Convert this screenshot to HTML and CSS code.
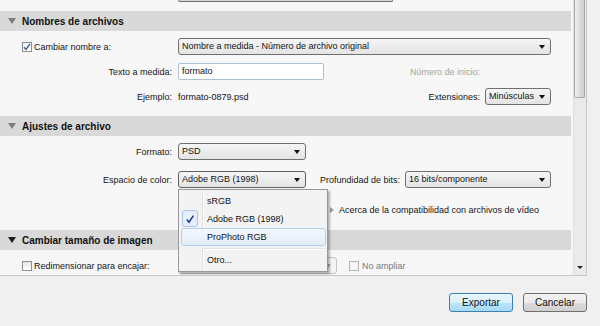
FILE: index.html
```html
<!DOCTYPE html>
<html lang="es">
<head>
  <meta charset="UTF-8" />
  <title>Exportar</title>
  <link rel="stylesheet" href="styles.css">
</head>
<body>
  <div class="dialog">
    <div class="panel">
      <div class="content">
        <div class="stub"></div>

        <div class="section-head"><span class="tri"></span>Nombres de archivos</div>
        <div class="section s-names">
          <div class="row">
            <div class="cell check-cell"><span class="chk on"><svg width="8" height="8" viewBox="0 0 8 8"><path d="M1 4.2 L3 6.4 L7 0.8" fill="none" stroke="#3f5896" stroke-width="1.4"/></svg></span>Cambiar nombre a:</div>
            <div class="select grow">Nombre a medida - Número de archivo original</div>
          </div>
          <div class="row">
            <div class="cell">Texto a medida:</div>
            <div class="input">formato</div>
            <div class="right">
              <span class="muted">Número de inicio:</span>
              <span class="slot"></span>
            </div>
          </div>
          <div class="row">
            <div class="cell">Ejemplo:</div>
            <div>formato-0879.psd</div>
            <div class="right">
              <span>Extensiones:</span>
              <div class="select slot">Minúsculas</div>
            </div>
          </div>
        </div>

        <div class="section-head"><span class="tri"></span>Ajustes de archivo</div>
        <div class="section s-file">
          <div class="row">
            <div class="cell">Formato:</div>
            <div class="select short">PSD</div>
          </div>
          <div class="row">
            <div class="cell">Espacio de color:</div>
            <div class="drop">
              <div class="select short open">Adobe RGB (1998)</div>
              <div class="menu">
                <div class="gutter-line"></div>
                <div class="item">sRGB</div>
                <div class="item checked">
                  <span class="tick"><svg width="10" height="10" viewBox="0 0 10 10"><path d="M1.8 5.6 L4 8.2 L8.4 1.6" fill="none" stroke="#17378a" stroke-width="1.5"/></svg></span>
                  Adobe RGB (1998)
                </div>
                <div class="item hover">ProPhoto RGB</div>
                <div class="sep"></div>
                <div class="item">Otro...</div>
              </div>
            </div>
            <span class="bits-label">Profundidad de bits:</span>
            <div class="select grow">16 bits/componente</div>
          </div>
          <div class="row about">
            <span class="arrow-right"></span>Acerca de la compatibilidad con archivos de vídeo
          </div>
        </div>

        <div class="section-head"><span class="tri dark"></span>Cambiar tamaño de imagen</div>
        <div class="section s-size">
          <div class="row">
            <div class="cell check-cell"><span class="chk"></span>Redimensionar para encajar:</div>
            <div class="select disabled fit"></div>
            <span class="chk off-chk"></span><span class="muted dim">No ampliar</span>
          </div>
        </div>
      </div>

      <div class="scrollbar">
        <div class="thumb"></div>
        <div class="track"></div>
        <span class="down"></span>
      </div>
    </div>

    <div class="buttons">
      <button class="btn default">Exportar</button>
      <button class="btn">Cancelar</button>
    </div>
  </div>
</body>
</html>
```

FILE: styles.css
```css
* {
  box-sizing: border-box;
}

body {
  margin: 0;
  background: #f0f0f0;
  font-family: "Liberation Sans", Arial, sans-serif;
  font-size: 9px;
  color: #141414;
}

.dialog {
  width: 600px;
  height: 326px;
  overflow: hidden;
}

.panel {
  display: flex;
  width: 587px;
  height: 276px;
  background: #f7f7f7;
  border-right: 1px solid #c9c3d3;
  border-bottom: 1px solid #c9c3d3;
  overflow: hidden;
}

.content {
  width: 571px;
  margin-right: 2px;
  flex-shrink: 0;
}

.stub {
  margin-left: 178px;
  width: 215px;
  height: 2px;
  background: #d6d6d6;
  border: 1px solid #707070;
  border-top: none;
  border-radius: 0 0 2px 2px;
  margin-bottom: 9px;
}

.section-head {
  display: flex;
  align-items: center;
  height: 20px;
  padding-left: 8px;
  background: #d9d9d9;
  font-weight: bold;
  font-size: 10px;
  color: #111;
}

.tri {
  width: 0;
  height: 0;
  border-left: 4px solid transparent;
  border-right: 4px solid transparent;
  border-top: 6px solid #7d7d7d;
  margin-right: 6px;
}

.tri.dark {
  border-top-color: #1e1e1e;
}

.section {
  display: flex;
  flex-direction: column;
}

.s-names {
  padding: 7px 0 11px;
  gap: 8px;
}

.s-file {
  padding: 7px 0 12px;
  gap: 11px;
}

.s-size {
  padding-top: 7px;
}

.row {
  display: flex;
  align-items: center;
  height: 17px;
  padding-right: 20px;
}

.cell {
  width: 178px;
  flex-shrink: 0;
  text-align: right;
  padding-right: 6px;
}

.check-cell {
  display: flex;
  align-items: center;
  text-align: left;
  padding-left: 22px;
}

.chk {
  display: inline-flex;
  align-items: center;
  justify-content: center;
  width: 10px;
  height: 10px;
  margin-right: 2px;
  border: 1px solid #8e8f8f;
  background: linear-gradient(#e6e6e6, #ffffff);
  flex-shrink: 0;
}

.chk.on {
  background: linear-gradient(#eef3fb, #ffffff);
}

.select {
  position: relative;
  height: 17px;
  line-height: 15px;
  padding-left: 3px;
  border: 1px solid #707070;
  border-radius: 3px;
  background: linear-gradient(#f5f5f5, #e4e4e4);
  white-space: nowrap;
  overflow: hidden;
}

.select::after {
  content: "";
  position: absolute;
  right: 5px;
  top: 6px;
  border-left: 3.5px solid transparent;
  border-right: 3.5px solid transparent;
  border-top: 4px solid #111;
}

.grow {
  flex: 1;
}

.short {
  width: 128px;
}

.input {
  width: 146px;
  height: 17px;
  line-height: 15px;
  padding-left: 3px;
  border: 1px solid #a9c2da;
  border-radius: 2px;
  background: #fff;
}

.right {
  display: flex;
  align-items: center;
  gap: 5px;
  margin-left: auto;
}

.slot {
  width: 66px;
}

.muted {
  color: #a4a4a4;
}

.dim {
  color: #7a7a7a;
}

.drop {
  position: relative;
}

.open {
  border-color: #5f5f5f;
}

.bits-label {
  margin: 0 5px 0 14px;
}

.menu {
  position: absolute;
  left: 0;
  top: 18px;
  z-index: 5;
  width: 150px;
  height: 83px;
  padding: 2px 1px 1px 2px;
  background: #f3f3f3;
  border: 1px solid #979797;
  box-shadow: 2px 2px 2px rgba(0, 0, 0, 0.28);
}

.gutter-line {
  position: absolute;
  left: 23px;
  top: 1px;
  bottom: 1px;
  width: 2px;
  border-left: 1px solid #e0e0e0;
  border-right: 1px solid #ffffff;
}

.item {
  position: relative;
  height: 18px;
  line-height: 17px;
  padding-left: 25px;
  border: 1px solid transparent;
  border-radius: 3px;
  color: #111;
}

.item.hover {
  border-color: #b4cfee;
  background: linear-gradient(#f4f8fd, #e2ecf9);
}

.tick {
  position: absolute;
  left: 0;
  top: -1px;
  width: 16px;
  height: 17px;
  display: flex;
  align-items: center;
  justify-content: center;
  border: 1px solid #a9c6ea;
  border-radius: 3px;
  background: #e6eefa;
}

.sep {
  position: relative;
  height: 5px;
  margin-left: 22px;
}

.sep::before {
  content: "";
  position: absolute;
  left: 0;
  right: 0;
  top: 2px;
  border-top: 1px solid #e0e0e0;
  border-bottom: 1px solid #ffffff;
}

.about {
  margin-top: 2px;
  padding-left: 330px;
}

.arrow-right {
  width: 0;
  height: 0;
  border-top: 3px solid transparent;
  border-bottom: 3px solid transparent;
  border-left: 4px solid #9a9a9a;
  margin-right: 5px;
}

.disabled {
  border-color: #c4c4c4;
  background: #f4f4f4;
}

.disabled::after {
  border-top-color: #a8a8a8;
}

.fit {
  width: 159px;
  flex-shrink: 0;
}

.off-chk {
  margin-left: 12px;
  margin-right: 3px;
  border-color: #b4b4b4;
  background: #f6f6f6;
}

.scrollbar {
  width: 13px;
  height: 275px;
  display: flex;
  flex-direction: column;
  background: #eaeaea;
  border-left: 1px solid #e2e2e2;
}

.thumb {
  height: 98px;
  margin: 0 1px 0 0;
  border: 1px solid #a8a8a8;
  border-top: none;
  border-radius: 0 0 2px 2px;
  background: linear-gradient(to right, #f0f0f0, #d9d9d9 60%, #cfcfcf);
}

.track {
  flex: 1;
}

.down {
  align-self: center;
  margin-bottom: 6px;
  border-left: 3px solid transparent;
  border-right: 3px solid transparent;
  border-top: 3px solid #222;
}

.buttons {
  display: flex;
  justify-content: flex-end;
  gap: 10px;
  padding: 17px 13px 0 0;
}

.btn {
  width: 64px;
  height: 19px;
  padding: 0;
  font-family: "Liberation Sans", Arial, sans-serif;
  font-size: 10px;
  color: #111;
  border: 1px solid #707070;
  border-radius: 3px;
  background: linear-gradient(#f2f2f2, #ebebeb 50%, #dddddd 50%, #cfcfcf);
}

.btn.default {
  border-color: #3c7fb1;
  background: linear-gradient(#eaf6fd, #d9f0fc 50%, #bee6fd 50%, #a7d9f5);
}
```
